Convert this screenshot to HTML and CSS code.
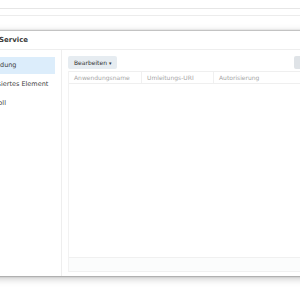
FILE: index.html
```html
<!DOCTYPE html>
<html lang="de">
<head>
    <meta charset="UTF-8" />
    <link rel="stylesheet" href="styles.css">
    <title>OAuth Service</title>
</head>
<body>
    <div class="desk">
        <div class="strip"></div>
        <div class="strip second"></div>
    </div>
    <section class="window">
        <div class="title">OAuth Service</div>
        <div class="body">
            <ul class="sidebar">
                <li class="item active">Anwendung</li>
                <li class="item">Autorisiertes Element</li>
                <li class="item">Protokoll</li>
            </ul>
            <div class="main">
                <div class="toolbar">
                    <button type="button" class="btn">Bearbeiten <span class="caret">&#9662;</span></button>
                    <button type="button" class="btn search"></button>
                </div>
                <div class="grid">
                    <div class="head">
                        <div class="col c1">Anwendungsname</div>
                        <div class="col c2">Umleitungs-URI</div>
                        <div class="col c3">Autorisierung</div>
                    </div>
                    <div class="rows"></div>
                    <div class="paging"></div>
                </div>
            </div>
        </div>
    </section>
</body>
</html>
```

FILE: styles.css
```css
* {
    margin: 0;
    padding: 0;
    box-sizing: border-box;
}

body {
    background-color: #ffffff;
    font-family: "DejaVu Sans", sans-serif;
    color: #333333;
    overflow: hidden;
    height: 300px;
}

.desk {
    height: 27px;
}

.strip {
    height: 9px;
    border-bottom: 1px solid #e6e6e6;
}

.strip.second {
    height: 7px;
    border-bottom: 1px solid #ececec;
}

section.window {
    margin: 4px 0 0 -30px;
    width: 360px;
    height: 245px;
    background-color: #ffffff;
    box-shadow: 0 0 2px rgba(0, 0, 0, 0.55), 0 2px 8px rgba(0, 0, 0, 0.25);
    display: flex;
    flex-direction: column;
}

.title {
    height: 19px;
    line-height: 19px;
    padding-left: 2px;
    font-size: 7px;
    font-weight: bold;
    color: #3b3b3b;
    border-bottom: 1px solid #eeeeee;
    white-space: nowrap;
}

.body {
    flex: 1;
    display: flex;
}

.sidebar {
    list-style: none;
    width: 92px;
    border-right: 1px solid #eeeeee;
    padding-top: 7px;
}

.item {
    height: 17px;
    line-height: 17px;
    margin-right: 6px;
    margin-bottom: 2px;
    padding-left: 8px;
    font-size: 6.5px;
    color: #404040;
    white-space: nowrap;
}

.item.active {
    background-color: #dcedfb;
}

.main {
    flex: 1;
    padding: 6px 6px 4px 6px;
    display: flex;
    flex-direction: column;
}

.toolbar {
    display: flex;
    justify-content: space-between;
    height: 13px;
}

.btn {
    height: 13px;
    border: none;
    border-radius: 2px;
    background-color: #e6ecf1;
    color: #333333;
    font-family: "DejaVu Sans", sans-serif;
    font-size: 6px;
    padding: 0 6px;
}

.caret {
    font-size: 5px;
}

.btn.search {
    width: 30px;
    background-color: #dfe3e7;
}

.grid {
    flex: 1;
    margin-top: 2px;
    border-left: 1px solid #f2f2f2;
    display: flex;
    flex-direction: column;
}

.head {
    display: flex;
    height: 13px;
    border-top: 1px solid #efefef;
    border-bottom: 1px solid #efefef;
}

.col {
    font-size: 6px;
    color: #a6a6a6;
    line-height: 11px;
    padding-left: 5px;
    white-space: nowrap;
}

.c1 {
    width: 73px;
    border-right: 1px solid #f0f0f0;
}

.c2 {
    width: 72px;
    border-right: 1px solid #f0f0f0;
}

.c3 {
    flex: 1;
}

.rows {
    flex: 1;
}

.paging {
    height: 15px;
    border-top: 1px solid #f0f0f0;
    border-bottom: 1px solid #f0f0f0;
    background-color: #fbfcfc;
}
```
